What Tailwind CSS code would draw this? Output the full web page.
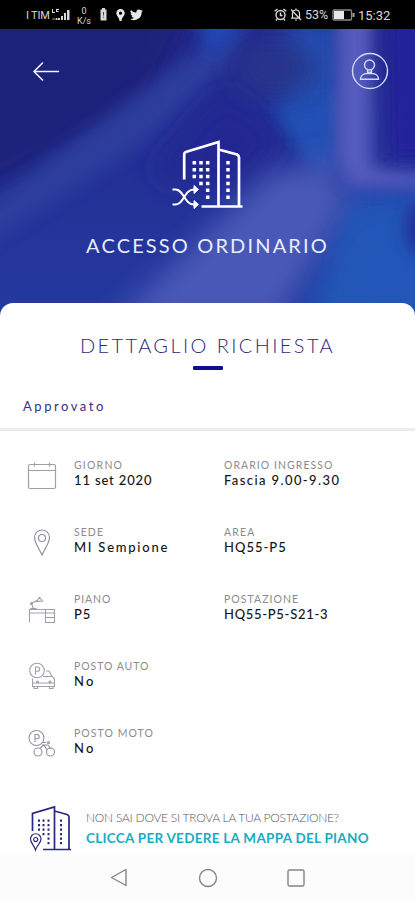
<!DOCTYPE html>
<html lang="it">
<head>
    <meta charset="UTF-8">
    <meta name="viewport" content="width=device-width, initial-scale=1.0">
    <title>Dettaglio Richiesta</title>
    <script src="https://cdn.jsdelivr.net/npm/@tailwindcss/browser@4"></script>
</head>
<body class="bg-white font-['Lato',sans-serif]">
    <div class="flex flex-col w-[415px] h-[900px] overflow-hidden">
        <!-- Status bar -->
        <div class="flex items-center justify-between h-[29px] shrink-0 bg-black text-[#d8d8d8] pl-[26px] pr-[23px] font-['Roboto',sans-serif]">
            <div class="flex items-center">
                <span class="text-[11px] leading-none w-[25px] tracking-[-0.2px] whitespace-nowrap pt-px">I TIM</span>
                <svg class="w-5 h-4" viewBox="0 0 20 16" fill="#d8d8d8">
                    <path d="M1 2h1v3h2v1H1zM5 2h3v1H6v1h1.500v1H5z"/>
                    <path d="M1 11h6v2H1z" opacity=".35"/>
                    <path d="M7 11h2v2H7zM10 9h2v4h-2zM13 6h2v7h-2zM16 3h2.500v10H16zM5 11h1v2H5z"/>
                </svg>
                <div class="flex flex-col items-center text-[9px] leading-[10px] w-[20px] ml-[3px] pt-[2px]">
                    <span>0</span>
                    <span>K/s</span>
                </div>
                <svg class="w-[9px] h-[13px] ml-[5px]" viewBox="0 0 9 13"><path d="M3 0h3v1.500h1.500v11h-6v-11H3z" fill="#d8d8d8"/><path d="M4.500 4v3.500M4.500 8.700v1" stroke="#444" stroke-width="1"/></svg>
                <svg class="w-[9px] h-[12px] ml-[8px]" viewBox="0 0 9 12" fill="#e8e8e8" fill-rule="evenodd"><path d="M4.500 0A4.200 4.200 0 0 1 8.700 4.200C8.700 7 5.800 8 5.500 12h-2C3.200 8 .3 7 .3 4.200A4.200 4.200 0 0 1 4.500 0zM4.500 2.600a1.600 1.600 0 1 0 0 3.200a1.600 1.600 0 0 0 0-3.200z"/></svg>
                <svg class="w-[13px] h-[12px] ml-[5px]" viewBox="1 3 22 18" fill="#e8e8e8"><path d="M23 4.900a9 9 0 0 1-2.600.7 4.500 4.500 0 0 0 2-2.500 9 9 0 0 1-2.900 1.100 4.500 4.500 0 0 0-7.700 4.100A12.800 12.800 0 0 1 2.500 3.600a4.500 4.500 0 0 0 1.400 6 4.500 4.500 0 0 1-2-.6 4.500 4.500 0 0 0 3.600 4.500 4.500 4.500 0 0 1-2 .1 4.500 4.500 0 0 0 4.200 3.100A9 9 0 0 1 1 18.600a12.700 12.700 0 0 0 19.600-11.300A9 9 0 0 0 23 4.900z"/></svg>
            </div>
            <div class="flex items-center">
                <svg class="w-[13px] h-[13px]" viewBox="0 0 13 13" fill="none" stroke="#d8d8d8" stroke-width="1.400"><circle cx="6.500" cy="7" r="4.500"/><path d="M6.500 4.500v3h2M.7 3.300L3.500 1M12.300 3.300L9.500 1M3 11l-1 1.500M10 11l1 1.500"/></svg>
                <svg class="w-[12px] h-[13px] ml-[3px]" viewBox="0 0 12 13" fill="none" stroke="#d8d8d8" stroke-width="1.200"><path d="M2.500 10V5.500a3.500 3.500 0 0 1 7 0V10M1 10.200h9M6 .5v2M5 12h2M1 1.500l10 10.500"/></svg>
                <span class="text-[12.500px] leading-none ml-[3px] w-[26px] pt-px">53%</span>
                <svg class="w-[23px] h-[12px] ml-px" viewBox="0 0 23 12"><rect x="1" y="1" width="18.500" height="10" rx="1" fill="none" stroke="#8a8a8a" stroke-width="1.300"/><path d="M2 2h10v8H2z" fill="#e8e8e8"/><path d="M20.500 4h2v4h-2z" fill="#a8a8a8"/></svg>
                <span class="text-[13px] leading-none ml-[3px] w-[34px] whitespace-nowrap pt-px">15:32</span>
            </div>
        </div>

        <!-- Hero -->
        <header class="relative h-[274px] shrink-0">
            <svg class="absolute top-0 left-0 w-[415px] h-[291px]" viewBox="0 29 415 291" preserveAspectRatio="none">
                <defs>
                    <filter id="b8" x="-100%" y="-100%" width="300%" height="300%"><feGaussianBlur stdDeviation="8"/></filter>
                    <filter id="b14" x="-100%" y="-100%" width="300%" height="300%"><feGaussianBlur stdDeviation="14"/></filter>
                    <linearGradient id="base" x1="0" y1="0" x2="0" y2="1">
                        <stop offset="0" stop-color="#23298c"/>
                        <stop offset="1" stop-color="#2439a0"/>
                    </linearGradient>
                </defs>
                <rect x="0" y="29" width="415" height="291" fill="url(#base)"/>
                <path d="M-40 0H200L150 110L-40 205z" fill="#1f217a" filter="url(#b14)"/>
                <path d="M-30 218L190 55L250 20L225 70L150 140L-30 255z" fill="#2e3f9f" opacity=".85" filter="url(#b8)"/>
                <path d="M198 10H250L225 50L205 55z" fill="#2347b4" filter="url(#b8)"/>
                <path d="M225 90L285 140L240 190L150 175z" fill="#232892" filter="url(#b14)"/>
                <path d="M290 20H340V320H440V190H350L280 95z" fill="#2351b4" filter="url(#b14)"/>
                <path d="M272 105L335 95L335 180L310 168z" fill="#2450b4" filter="url(#b8)"/>
                <ellipse cx="275" cy="68" rx="42" ry="26" fill="#26348a" filter="url(#b14)"/>
                <path d="M110 325L270 172L330 160L350 200L335 235L275 325z" fill="#4a59b6" filter="url(#b14)"/>
                <path d="M300 325L350 215L430 200V330z" fill="#2357b8" filter="url(#b14)"/>
                <path d="M338 0H372V168L430 174V188H350L336 160z" fill="#555bbe" filter="url(#b8)"/>
                <path d="M388 0H440V158H390z" fill="#23249a" filter="url(#b8)"/>
                <ellipse cx="418" cy="228" rx="13" ry="26" fill="#222f98" filter="url(#b8)"/>
            </svg>
            <div class="relative flex flex-col h-full">
                <div class="flex items-start justify-between pl-[33px] pr-[26px] pt-[23px]">
                    <svg class="w-[27px] h-[20px] mt-[10px]" viewBox="0 0 27 20" fill="none" stroke="#f2f4ff" stroke-width="1.600" stroke-linecap="round" stroke-linejoin="round"><path d="M25.500 9.500H1M9.500 1L1 9.500L9.500 18"/></svg>
                    <svg class="w-[38px] h-[38px]" viewBox="0 0 38 38" fill="none" stroke="#d3d8f6" stroke-width="1.400"><circle cx="19" cy="19" r="17.500"/><circle cx="18.500" cy="13" r="5"/><path d="M16.500 17.700v2.500h4v-2.500M16 21.500h5C25 21.500 27.500 24 27.500 27.300h-18C9.500 24 12 21.500 16 21.500z"/></svg>
                </div>
                <svg class="w-[74px] h-[74px] ml-[171px] mt-[48px]" viewBox="171 138 74 74" fill="none" stroke="#fff" stroke-width="2.700">
                    <path d="M184.200 179.500V154.500Q184.200 152.500 186.500 151.700L218.500 142V206M218.500 149.500L237 154.500Q239 155.500 239 157.500V206M201.500 206.500H242.500"/>
                    <g stroke-width="3.500" stroke-dasharray="3.500 3.400">
                        <path d="M194.300 161V179M201 161V186M207.700 161V199M228 161V199"/>
                    </g>
                    <path stroke-width="2" d="M172.500 189.500h3C184 189.500 184 204.500 194 204.500h3M172.500 204.500h3C184 204.500 184 189.500 194 189.500h3"/>
                    <path fill="#fff" stroke-width="1" d="M194 185.500l4.500 4l-4.500 4zM194 200.500l4.500 4l-4.500 4z"/>
                </svg>
                <h1 class="text-[20px] leading-6 text-[#e9ecff] text-center tracking-[2.150px] mt-[21px] whitespace-nowrap">ACCESSO ORDINARIO</h1>
            </div>
        </header>

        <!-- Card -->
        <main class="relative flex flex-col h-[552px] shrink-0 bg-white rounded-t-[13px]">
            <h2 class="text-[20px] leading-6 font-light text-[#2d2877] text-center tracking-[2.400px] pt-[30px] whitespace-nowrap">DETTAGLIO RICHIESTA</h2>
            <div class="w-[30px] h-1 rounded-[1px] bg-[#0d0d8f] ml-[193px] mt-[9px]"></div>
            <p class="text-[13px] leading-4 text-[#35308a] tracking-[2.550px] pl-[23px] mt-[28px] h-4">Approvato</p>
            <div class="h-[3px] bg-[#ececec] mt-[14px]"></div>

            <div class="flex flex-col pt-[27px] pl-[24px]">
                <div class="flex h-[67px]">
                    <svg class="w-[36px] h-[34px] mr-[14px]" viewBox="24 458 36 34" fill="none" stroke="#a0a0ab" stroke-width="1.200"><rect x="28.500" y="464.500" width="27" height="24" rx="1.500"/><path d="M28.500 470.500h27M34.500 462.500v4M49.500 462.500v4"/></svg>
                    <div class="w-[150px]">
                        <p class="text-[10.500px] leading-[14px] text-[#8c8c8c] tracking-[1.200px]">GIORNO</p>
                        <p class="text-[13px] leading-4 font-medium text-[#151515] tracking-[0.850px]">11 set 2020</p>
                    </div>
                    <div>
                        <p class="text-[10.500px] leading-[14px] text-[#8c8c8c] tracking-[1.050px]">ORARIO INGRESSO</p>
                        <p class="text-[13px] leading-4 font-medium text-[#151515] tracking-[1.400px]">Fascia 9.00-9.30</p>
                    </div>
                </div>
                <div class="flex h-[67px]">
                    <svg class="w-[36px] h-[34px] mr-[14px]" viewBox="24 525 36 34" fill="none" stroke="#92929f" stroke-width="1.200"><path d="M42 555C39 548 34.500 543 34.500 537.500a7.500 7.500 0 0 1 15 0C49.500 543 45 548 42 555z"/><circle cx="42" cy="538" r="3.500"/></svg>
                    <div class="w-[150px]">
                        <p class="text-[10.500px] leading-[14px] text-[#8c8c8c] tracking-[1.050px]">SEDE</p>
                        <p class="text-[13px] leading-4 font-medium text-[#151515] tracking-[1.750px]">MI Sempione</p>
                    </div>
                    <div>
                        <p class="text-[10.500px] leading-[14px] text-[#8c8c8c] tracking-[1.150px]">AREA</p>
                        <p class="text-[13px] leading-4 font-medium text-[#151515] tracking-[1px]">HQ55-P5</p>
                    </div>
                </div>
                <div class="flex h-[67px]">
                    <svg class="w-[36px] h-[34px] mr-[14px]" viewBox="24 592 36 34" fill="none" stroke="#a0a0ab" stroke-width="1.100"><path d="M29.500 622.500v-13h25v13h-9v-13M29.500 613h25M45.500 617.500h9M33.500 609l-2-5.500l7-4M30.500 608.500h6M36.500 601.500l3-4l3 3.500z"/><circle cx="31.500" cy="603.500" r="1"/></svg>
                    <div class="w-[150px]">
                        <p class="text-[10.500px] leading-[14px] text-[#8c8c8c] tracking-[0.900px]">PIANO</p>
                        <p class="text-[13px] leading-4 font-medium text-[#151515] tracking-[0.800px]">P5</p>
                    </div>
                    <div>
                        <p class="text-[10.500px] leading-[14px] text-[#8c8c8c] tracking-[1.050px]">POSTAZIONE</p>
                        <p class="text-[13px] leading-4 font-medium text-[#151515] tracking-[0.700px]">HQ55-P5-S21-3</p>
                    </div>
                </div>
                <div class="flex h-[67px]">
                    <svg class="w-[36px] h-[34px] mr-[14px]" viewBox="24 659 36 34" fill="none" stroke="#a0a0ab" stroke-width="1.100"><circle cx="37" cy="670.500" r="7.300"/><path d="M35.500 674.500v-7.500h2a2 2 0 0 1 0 4.300h-2M46 671h3l3 5.500h-9M52 676.500q2.500 1 2.500 4v6h-22v-8M32.500 683h22M34 687v1.500h3.500V687M49.500 687v1.500H53V687"/><circle cx="37.500" cy="682" r="1"/><circle cx="50" cy="682" r="1"/></svg>
                    <div>
                        <p class="text-[10.500px] leading-[14px] text-[#8c8c8c] tracking-[0.950px]">POSTO AUTO</p>
                        <p class="text-[13px] leading-4 font-medium text-[#151515] tracking-[2.300px]">No</p>
                    </div>
                </div>
                <div class="flex h-[67px]">
                    <svg class="w-[36px] h-[34px] mr-[14px]" viewBox="24 726 36 34" fill="none" stroke="#92929f" stroke-width="1.100"><circle cx="36.500" cy="738" r="7.500"/><path d="M35 742v-7.500h2a2 2 0 0 1 0 4.300h-2M42 745h6l3 4M40 748l4-3l3 5M43 742.500h3"/><circle cx="48.500" cy="742.500" r="1"/><circle cx="38" cy="752" r="4"/><circle cx="50.500" cy="752" r="4"/></svg>
                    <div>
                        <p class="text-[10.500px] leading-[14px] text-[#8c8c8c] tracking-[1.050px]">POSTO MOTO</p>
                        <p class="text-[13px] leading-4 font-medium text-[#151515] tracking-[2.300px]">No</p>
                    </div>
                </div>
            </div>

            <div class="flex items-start pl-[28px] pt-[10px]">
                <svg class="w-[46px] h-[50px] shrink-0" viewBox="28 803 46 50" fill="none" stroke="#282784" stroke-width="1.700">
                    <path d="M32.500 831V813.500L54.500 807V849.500M54.500 811L67 814.500Q69 815.200 69 817V849.500M43 849.500H71"/>
                    <g stroke-width="2" stroke-dasharray="2.200 2.300"><path d="M39 819.500V831M43.500 819.500V836M48.500 819.500V845M61 819.500V845"/></g>
                    <path stroke-width="1.200" d="M35.500 850C34 845 30.500 843 30.500 839a5 5 0 0 1 10.500 0C41 843 37 845 35.500 850z"/>
                    <circle stroke-width="1.100" cx="35.700" cy="839.500" r="2"/>
                </svg>
                <div class="pl-[12px] pt-[7px] whitespace-nowrap">
                    <p class="text-[12px] leading-4 font-light text-[#55555f] tracking-[-0.240px]">NON SAI DOVE SI TROVA LA TUA POSTAZIONE?</p>
                    <p class="text-[13.500px] leading-5 mt-[2px] font-bold text-[#18acc3] tracking-[0.280px]">CLICCA PER VEDERE LA MAPPA DEL PIANO</p>
                </div>
            </div>
        </main>

        <!-- Navigation bar -->
        <nav class="grow flex items-center justify-between bg-[#fcfcfc] pl-[110px] pr-[110px]">
            <svg class="w-[18px] h-[20px]" viewBox="0 0 18 20" fill="none" stroke="#858585" stroke-width="1.400" stroke-linejoin="round"><path d="M16 1.500v16L1.500 9.500z"/></svg>
            <svg class="w-[20px] h-[20px]" viewBox="0 0 20 20" fill="none" stroke="#858585" stroke-width="1.400"><circle cx="10" cy="10" r="8.500"/></svg>
            <svg class="w-[18px] h-[18px]" viewBox="0 0 18 18" fill="none" stroke="#858585" stroke-width="1.400"><rect x="1" y="1" width="16" height="16" rx="1.500"/></svg>
        </nav>
    </div>
</body>
</html>
